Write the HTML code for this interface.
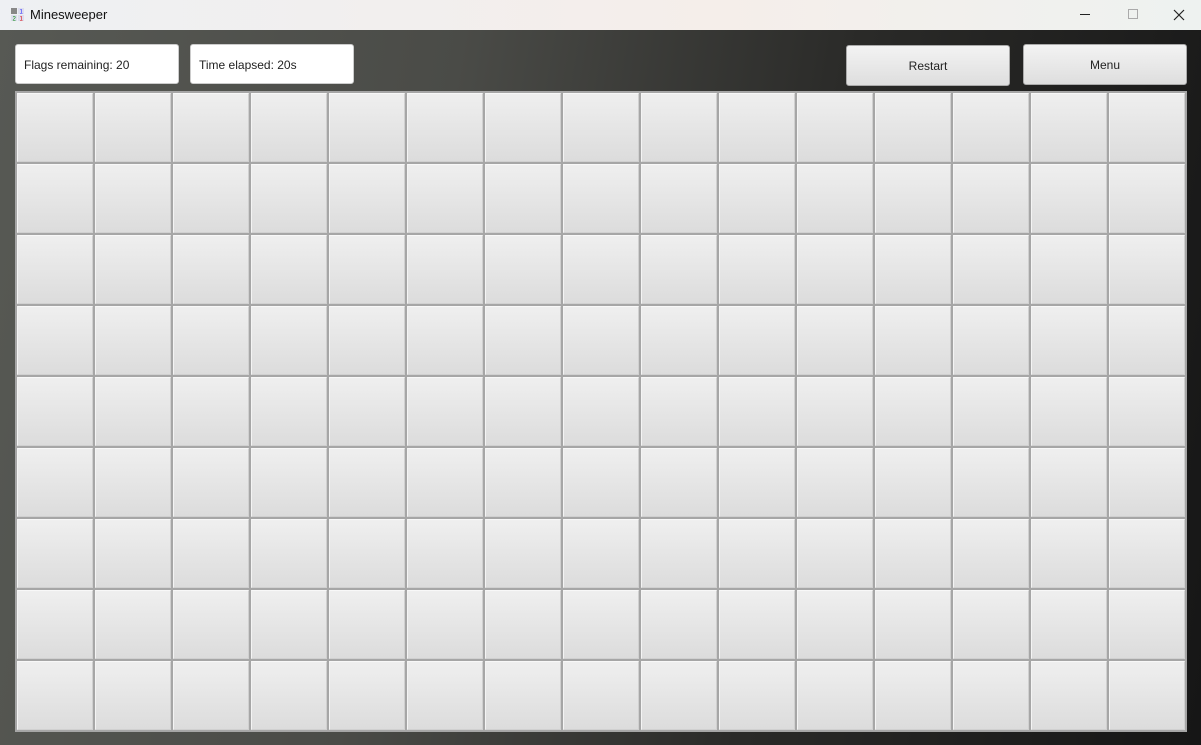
<!DOCTYPE html>
<html><head><meta charset="utf-8"><style>
*{margin:0;padding:0;box-sizing:border-box}
body{width:1201px;height:745px;overflow:hidden;font-family:"Segoe UI","Liberation Sans",sans-serif;background:#1c1c1b;position:relative}
#title{position:absolute;left:0;top:0;width:1201px;height:30px;background:linear-gradient(90deg,#eef0f3,#f5eeea 60%,#eef2f0);font-size:13px;color:#111}
#title .t{position:absolute;left:30px;top:7px}
#main{position:absolute;left:0;top:30px;width:1201px;height:715px;background:linear-gradient(100deg,#575954 0%,#4a4b47 35%,#2a2a28 65%,#161616 100%)}
.box{position:absolute;top:44px;height:40px;background:#fff;border:1px solid #ccc;border-radius:3px;font-size:12px;color:#222;padding:13px 0 0 8px}
.btn{position:absolute;top:45px;height:41px;background:linear-gradient(#f3f3f3,#dedede);border:1px solid #aaa;border-radius:3px;font-size:12px;color:#222;text-align:center;line-height:40px}
#grid{position:absolute;left:15px;top:91px;width:1172px;height:641px;background:#a6a6a6;padding:2px;display:grid;grid-template-columns:repeat(15,1fr);grid-template-rows:repeat(9,1fr);gap:2px}
#grid div{background:linear-gradient(#efefef,#dcdcdc);border:1px solid #d0d0d0;border-top-color:#f8f8f8;border-left-color:#f4f4f4}
</style></head><body>
<div id="title">
<svg style="position:absolute;left:11px;top:8px" width="13" height="13"><rect x="0" y="0" width="6" height="6" fill="#888"/><rect x="7" y="0" width="6" height="6" fill="#dde"/><rect x="0" y="7" width="6" height="6" fill="#dde"/><rect x="7" y="7" width="6" height="6" fill="#dde"/><text x="8.5" y="5.5" font-size="6" fill="#22f">1</text><text x="1.5" y="12.5" font-size="6" fill="#080">2</text><text x="8.5" y="12.5" font-size="6" fill="#d00">1</text></svg>
<span class="t">Minesweeper</span>
<svg style="position:absolute;left:1080px;top:8px" width="110" height="14"><line x1="0" y1="6.5" x2="10" y2="6.5" stroke="#222"/><rect x="48.5" y="1.5" width="9" height="9" fill="none" stroke="#aaa"/><path d="M94 2 L104 12 M104 2 L94 12" stroke="#222" stroke-width="1.2"/></svg>
</div>
<div id="main"></div>
<div class="box" style="left:15px;width:164px">Flags remaining: 20</div>
<div class="box" style="left:190px;width:164px">Time elapsed: 20s</div>
<div class="btn" style="left:846px;width:164px">Restart</div>
<div class="btn" style="left:1023px;top:44px;width:164px">Menu</div>
<div id="grid">
<div></div><div></div><div></div><div></div><div></div><div></div><div></div><div></div><div></div><div></div><div></div><div></div><div></div><div></div><div></div>
<div></div><div></div><div></div><div></div><div></div><div></div><div></div><div></div><div></div><div></div><div></div><div></div><div></div><div></div><div></div>
<div></div><div></div><div></div><div></div><div></div><div></div><div></div><div></div><div></div><div></div><div></div><div></div><div></div><div></div><div></div>
<div></div><div></div><div></div><div></div><div></div><div></div><div></div><div></div><div></div><div></div><div></div><div></div><div></div><div></div><div></div>
<div></div><div></div><div></div><div></div><div></div><div></div><div></div><div></div><div></div><div></div><div></div><div></div><div></div><div></div><div></div>
<div></div><div></div><div></div><div></div><div></div><div></div><div></div><div></div><div></div><div></div><div></div><div></div><div></div><div></div><div></div>
<div></div><div></div><div></div><div></div><div></div><div></div><div></div><div></div><div></div><div></div><div></div><div></div><div></div><div></div><div></div>
<div></div><div></div><div></div><div></div><div></div><div></div><div></div><div></div><div></div><div></div><div></div><div></div><div></div><div></div><div></div>
<div></div><div></div><div></div><div></div><div></div><div></div><div></div><div></div><div></div><div></div><div></div><div></div><div></div><div></div><div></div>
</div>
</body></html>
